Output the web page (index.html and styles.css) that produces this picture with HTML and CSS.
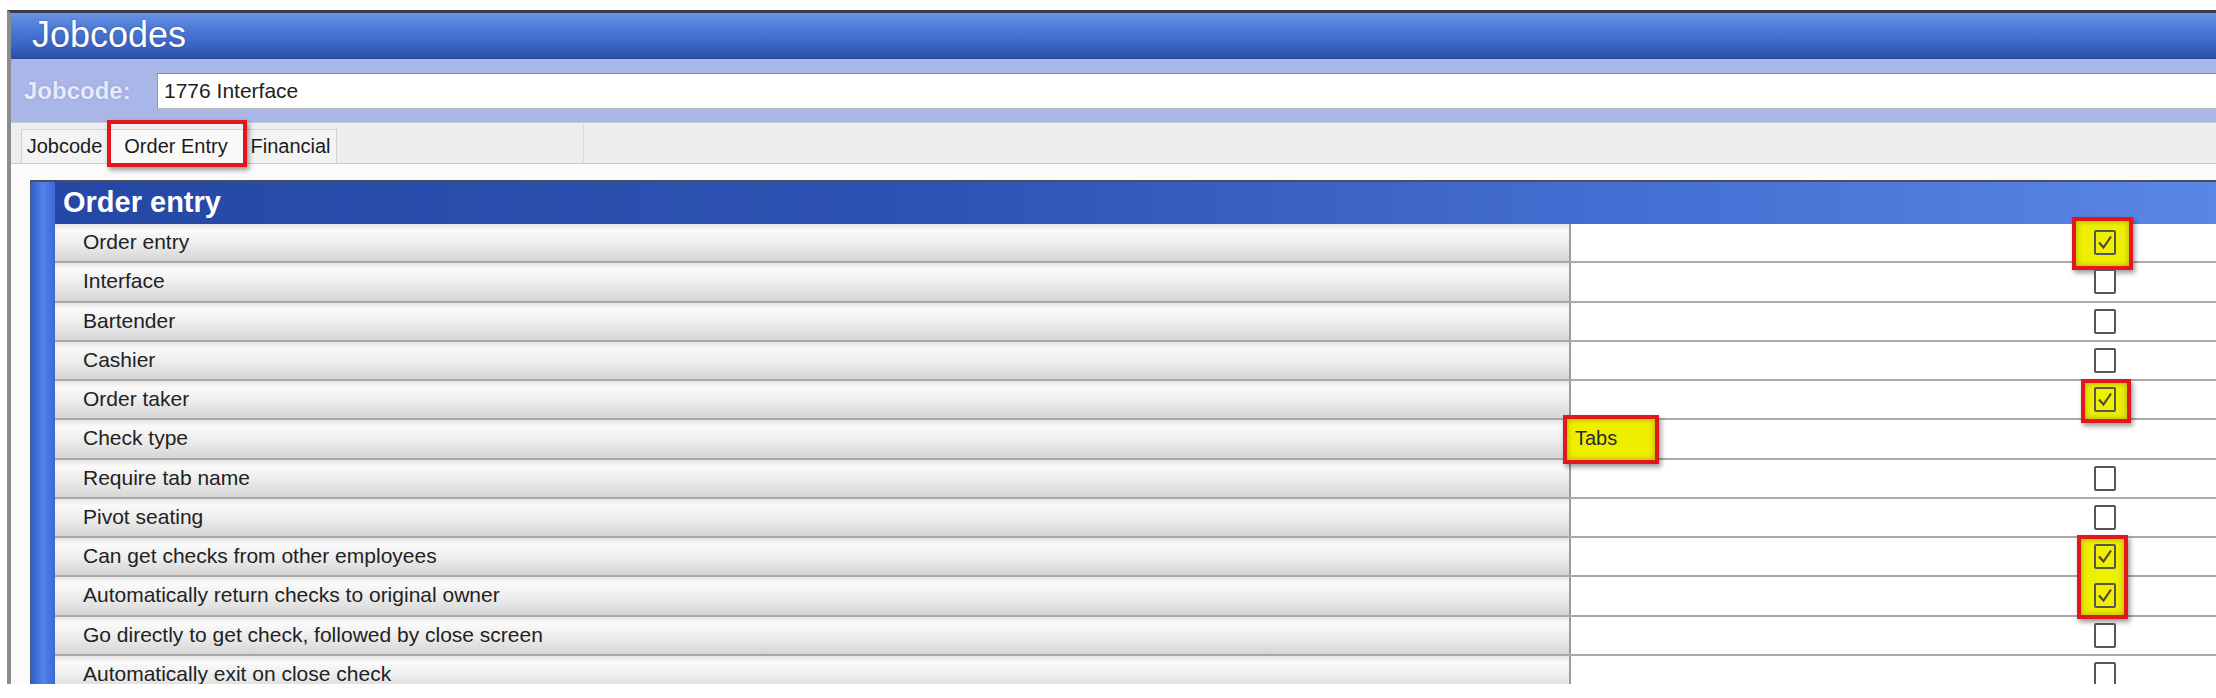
FILE: index.html
```html
<!DOCTYPE html>
<html lang="en">
<head>
  <meta charset="UTF-8">
  <title>Jobcodes</title>
  <link rel="stylesheet" href="styles.css">
</head>
<body>
  <div class="window">
    <div class="titlebar">Jobcodes</div>

    <div class="namebar">
      <span class="name-label">Jobcode:</span>
      <div class="name-input">1776 Interface</div>
    </div>

    <div class="tabs">
      <div class="tab tab-1">Jobcode</div>
      <div class="tab tab-2 active">Order Entry<span class="mark mark-tab"></span></div>
      <div class="tab tab-3">Financial</div>
      <div class="tab-split"></div>
    </div>

    <div class="content">
      <div class="section">
        <div class="strip"></div>
        <div class="section-main">
          <div class="section-head">Order entry</div>

          <div class="row">
            <div class="label">Order entry</div>
            <div class="value">
              <span class="mark hl hl-a"></span>
              <span class="check on"><svg viewBox="0 0 18 20"><polyline points="3,10 7.5,15 15,4"/></svg></span>
            </div>
          </div>
          <div class="row">
            <div class="label">Interface</div>
            <div class="value"><span class="check"></span></div>
          </div>
          <div class="row">
            <div class="label">Bartender</div>
            <div class="value"><span class="check"></span></div>
          </div>
          <div class="row">
            <div class="label">Cashier</div>
            <div class="value"><span class="check"></span></div>
          </div>
          <div class="row">
            <div class="label">Order taker</div>
            <div class="value">
              <span class="mark hl hl-b"></span>
              <span class="check on"><svg viewBox="0 0 18 20"><polyline points="3,10 7.5,15 15,4"/></svg></span>
            </div>
          </div>
          <div class="row">
            <div class="label">Check type</div>
            <div class="value">
              <span class="mark hl hl-tabs"></span>
              <span class="text-value">Tabs</span>
            </div>
          </div>
          <div class="row">
            <div class="label">Require tab name</div>
            <div class="value"><span class="check"></span></div>
          </div>
          <div class="row">
            <div class="label">Pivot seating</div>
            <div class="value"><span class="check"></span></div>
          </div>
          <div class="row">
            <div class="label">Can get checks from other employees</div>
            <div class="value">
              <span class="mark hl hl-c"></span>
              <span class="check on"><svg viewBox="0 0 18 20"><polyline points="3,10 7.5,15 15,4"/></svg></span>
            </div>
          </div>
          <div class="row">
            <div class="label">Automatically return checks to original owner</div>
            <div class="value">
              <span class="check on"><svg viewBox="0 0 18 20"><polyline points="3,10 7.5,15 15,4"/></svg></span>
            </div>
          </div>
          <div class="row">
            <div class="label">Go directly to get check, followed by close screen</div>
            <div class="value"><span class="check"></span></div>
          </div>
          <div class="row">
            <div class="label">Automatically exit on close check</div>
            <div class="value"><span class="check"></span></div>
          </div>
        </div>
      </div>
    </div>
  </div>
</body>
</html>
```

FILE: styles.css
```css
body { margin: 0; background: #fff; font-family: "Liberation Sans", Arial, sans-serif; color: #222; overflow: hidden; }

.window { margin: 10px 0 0 7px; height: 674px; box-sizing: border-box; border-top: 3px solid #3a3d46; border-left: 4px solid #8c8c8c; overflow: hidden; background: #fbfbfb; }

.titlebar { height: 46px; line-height: 44px; padding-left: 21px; font-size: 36px; color: #fff; text-shadow: 0 0 2px rgba(20, 40, 100, .6);
  background: linear-gradient(#6a93e6 0%, #4d7ad6 35%, #3b66c6 70%, #2b50a8 100%); border-bottom: 1px solid #23459a; box-sizing: border-box; }

.namebar { display: flex; align-items: center; padding: 14px 0 13px 13px; background: #aab5e8; border-bottom: 1px solid #c3c8de; }
.name-label { flex: 0 0 133px; font-size: 24px; font-weight: bold; color: #e6eafb; text-shadow: 0 0 2px #8791c4; }
.name-input { flex: 1; height: 36px; line-height: 34px; box-sizing: border-box; padding-left: 6px; background: #fff; font-size: 21px; color: #1e1e1e;
  border-top: 1px solid #8a8a8a; border-left: 1px solid #9a9a9a; border-bottom: 1px solid #b8b8b8; }

.tabs { display: flex; align-items: flex-end; height: 41px; box-sizing: border-box; padding-left: 10px; background: #eeeeee; border-bottom: 1px solid #cdcdcd; }
.tab { position: relative; height: 34px; line-height: 32px; box-sizing: border-box; text-align: center; font-size: 20px; color: #1b1b1b;
  background: #f3f3f3; border: 1px solid #d2d2d2; border-bottom: none; }
.tab-1 { width: 87px; }
.tab-2 { width: 136px; background: #f9f9f9; }
.tab-3 { width: 93px; }
.tab-split { width: 246px; height: 40px; border-right: 1px solid #dcdcdc; }

.content { padding: 16px 0 0 19px; }
.section { display: flex; border-top: 2px solid #4d4f55; border-left: 1px solid #4a5a88; }
.strip { flex: 0 0 24px; background: linear-gradient(to right, #2f5ecc, #5282ea 50%, #3b68d6); }
.section-main { flex: 1; }
.section-head { height: 42px; line-height: 40px; padding-left: 8px; font-size: 29px; font-weight: bold; color: #fff;
  background: linear-gradient(to right, #2548a6 0%, #2d53b2 40%, #4671d4 75%, #5a86e4 100%); }

.row { display: flex; height: 39.25px; box-sizing: border-box; border-bottom: 2px solid #a9a9a9; }
.label { flex: 0 0 1514px; padding-left: 28px; box-sizing: border-box; font-size: 21px; line-height: 36px; color: #222;
  background: linear-gradient(#e6e6e6 0%, #fafafa 18%, #ececec 55%, #d5d5d5 100%); }
.value { flex: 1; position: relative; display: flex; align-items: center; background: #fff; border-left: 2px solid #9c9c9c; }

.check { position: relative; z-index: 2; margin-left: 523px; width: 22px; height: 25px; box-sizing: border-box; border: 2px solid #555; border-radius: 2px; background: #fff; }
.check.on { background: transparent; }
.check svg { display: block; width: 100%; height: 100%; }
.check polyline { fill: none; stroke: #4a4a3a; stroke-width: 2.2; }

.text-value { position: relative; z-index: 2; padding-left: 4px; font-size: 20px; color: #2a2a2a; }

.mark { position: absolute; z-index: 1; box-sizing: border-box; border: 4px solid #e3161b; box-shadow: 2px 3px 5px rgba(0, 0, 0, .4); }
.mark-tab { left: -2px; right: -4px; top: -10px; bottom: -4px; }
.hl { background: #eff000; box-shadow: 2px 3px 5px rgba(0, 0, 0, .4), inset 0 0 6px rgba(110, 110, 0, .55); }
.hl-a { left: 501px; top: -7px; width: 61px; height: 53px; }
.hl-b { left: 510px; top: -2px; width: 50px; height: 44px; }
.hl-c { left: 506px; top: -3px; width: 51px; height: 84px; }
.hl-tabs { left: -8px; top: -5px; width: 96px; height: 49px; }
```
